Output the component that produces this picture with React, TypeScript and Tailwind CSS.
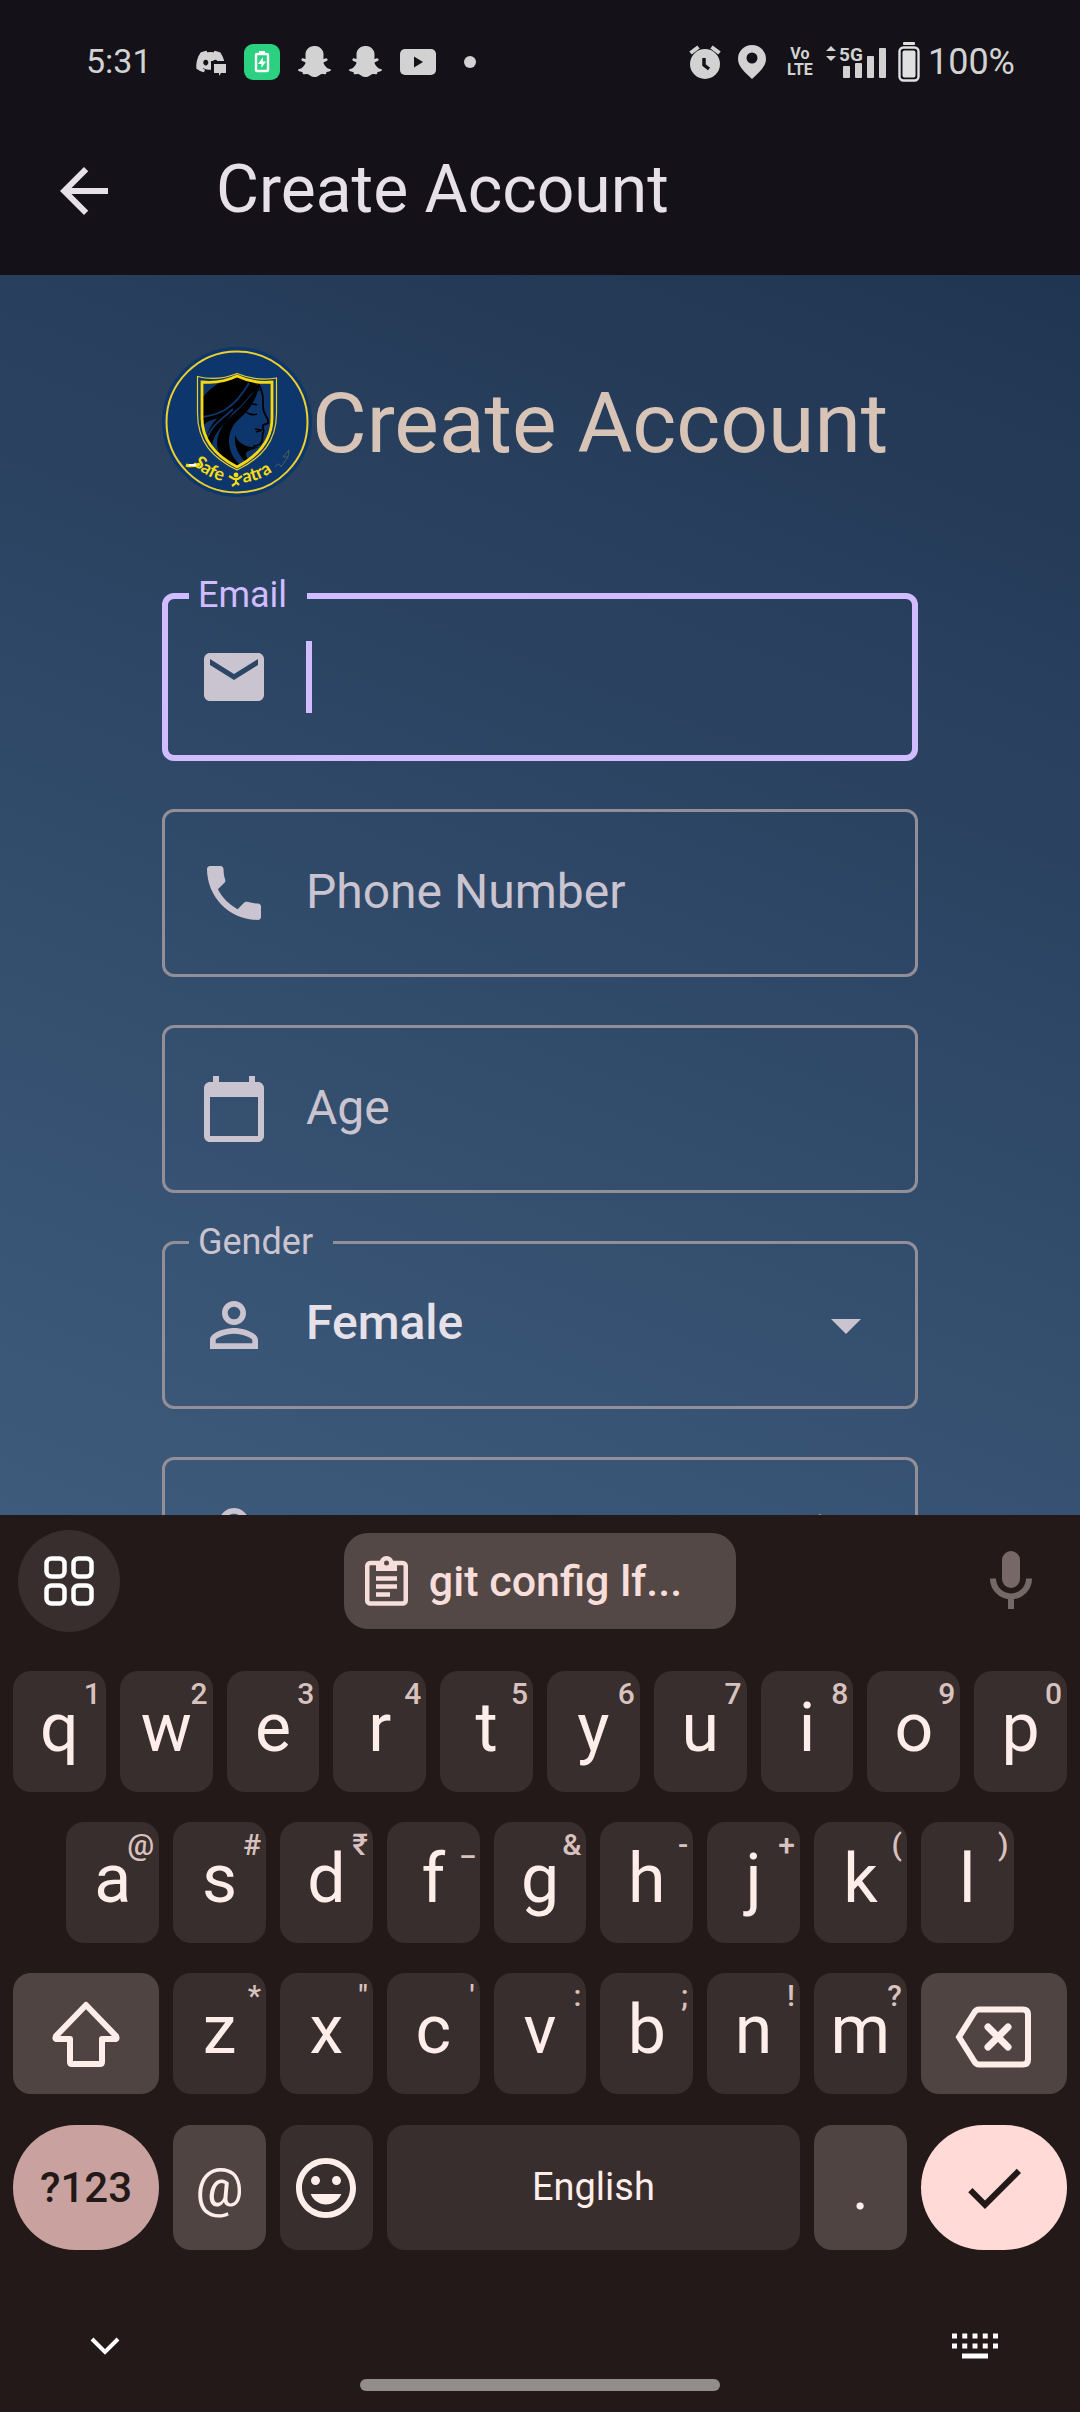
import React from "react";
import {
  MdArrowBack,
  MdArrowDropDown,
  MdCalendarToday,
  MdCheck,
  MdEmail,
  MdLockOutline,
  MdMood,
  MdPersonOutline,
  MdPhone,
  MdVisibilityOff,
} from "react-icons/md";
import { FaDiscord, FaSnapchatGhost } from "react-icons/fa";

function StatusBar() {
  return (
    <div className="flex h-[107px] items-center bg-[#141218] pt-4 pr-[65px] pl-[86px] text-[36px] text-[#d2d2d2]">
      <span className="w-[109px] text-[34px]">5:31</span>
      <div className="flex items-center gap-[18px]">
        <div className="relative">
          <FaDiscord className="size-[31px]" aria-label="Discord" />
          <svg viewBox="0 0 16 16" className="absolute -right-px bottom-0 size-4" aria-hidden="true">
            <path d="M0 0h16v16H0z" fill="#141218" />
            <path d="M3 3h12v9h-5l-2 3v-3H3z" fill="#d2d2d2" />
          </svg>
        </div>
        <svg viewBox="0 0 36 36" className="size-9" aria-label="Battery charging">
          <rect width="36" height="36" rx="9" fill="#2bd180" />
          <rect x="15" y="7" width="6" height="3" fill="#fff" />
          <rect x="12" y="10" width="12" height="17" rx="1" fill="none" stroke="#fff" strokeWidth="2.4" />
          <path d="M19 13l-5 7h3.400v4l4.600-6.500h-3.200z" fill="#fff" />
        </svg>
        <FaSnapchatGhost className="size-[33px]" aria-label="Snapchat" />
        <FaSnapchatGhost className="size-[33px]" aria-label="Snapchat" />
        <svg viewBox="0 0 36 26" className="h-[26px] w-9" aria-label="YouTube">
          <rect width="36" height="26" rx="5" fill="#d2d2d2" />
          <path d="M14 7.500v11l9-5.500z" fill="#141218" />
        </svg>
        <span className="ml-[10px] size-3 rounded-full bg-[#d2d2d2]" />
      </div>
      <div className="ml-auto flex items-center">
        <svg viewBox="0 0 32 34" className="mr-[17px] h-[34px] w-8" aria-label="Alarm">
          <circle cx="16" cy="19" r="15" fill="#d2d2d2" />
          <path d="M1.500 8l8-6M30.500 8l-8-6" stroke="#d2d2d2" strokeWidth="4" />
          <path d="M15 13v7l5 4" fill="none" stroke="#141218" strokeWidth="3.500" />
        </svg>
        <svg viewBox="0 0 28 34" className="mr-[21px] h-[34px] w-7" aria-label="Location">
          <path d="M14 0a14 14 0 0 0-14 14c0 8 8 14 14 20 6-6 14-12 14-20A14 14 0 0 0 14 0zm0 7.500a5.500 5.500 0 1 1 0 11 5.500 5.500 0 0 1 0-11z" fill="#d2d2d2" fillRule="evenodd" />
        </svg>
        <span className="mr-3 flex w-[26px] flex-col items-center font-['Liberation_Sans_Narrow',Roboto,sans-serif] text-[16px] leading-4 font-bold">
          <span>Vo</span>
          <span>LTE</span>
        </span>
        <svg viewBox="0 0 62 34" className="mr-[11px] h-[34px] w-[62px] overflow-visible" aria-label="5G signal">
          <path d="M6 1l5 5H1zM6 16l5-5H1z" fill="#d2d2d2" />
          <text x="14" y="16" fill="#d2d2d2" fontSize="19" fontWeight="700">5G</text>
          <rect x="18" y="21" width="7" height="12" rx="1" fill="#d2d2d2" />
          <rect x="30" y="18" width="7" height="15" rx="1" fill="#d2d2d2" />
          <rect x="42" y="11" width="7" height="22" rx="1" fill="#d2d2d2" />
          <rect x="54" y="3" width="7" height="30" rx="1" fill="#d2d2d2" />
        </svg>
        <svg viewBox="0 0 22 40" className="mr-2 h-10 w-[22px]" aria-label="Battery full">
          <rect x="5" y="0" width="12" height="3" rx="1" fill="#e0e0e0" />
          <rect x="1.500" y="5.500" width="19" height="33" rx="4" fill="none" stroke="#e0e0e0" strokeWidth="2.400" />
          <rect x="4.500" y="8.500" width="13" height="27" rx="2" fill="#e0e0e0" />
        </svg>
        <span>100%</span>
      </div>
    </div>
  );
}

function Logo() {
  return (
    <svg viewBox="0 0 150 150" className="size-[150px] shrink-0" role="img" aria-label="Safe Yatra">
      <defs>
        <path id="logo-arc" d="M14 75A61 61 0 0 0 136 75" />
        <clipPath id="logo-shield">
          <path d="M40 35q18 2 35-6 17 8 35 6v38c0 22-14 36-35 47-21-11-35-26-35-47z" />
        </clipPath>
      </defs>
      <circle cx="75" cy="75" r="75" fill="#0d366d" />
      <circle cx="75" cy="75" r="70.500" fill="none" stroke="#eed02b" strokeWidth="2" />
      <path d="M35.500 29.500q20 5 39.500-3 19.500 8 39.500 4.500v35c0 29-15 45-39.500 57-24.500-12-39.500-28-39.500-57z" fill="none" stroke="#e8cf30" strokeWidth="1.200" />
      <g clipPath="url(#logo-shield)">
        <path d="M38 54C46 42 60 31 78 30c12 1 18 6 20 14-9-4-13 14-29 22-9 5-20 8-31 8z" fill="#000" />
        <path d="M92 33c7 5 9 13 9 21 0 6-1 9 3 15 2 3 3 5 2 7-1 1-3 1-5 2" fill="none" stroke="#000" strokeWidth="1.800" />
        <path d="M98 36C94 56 84 66 75 74c-9 9-11 25-3 37l8 10-12-3C55 111 52 96 58 84c4-9 13-16 21-24 8-9 14-16 19-24z" fill="#000" />
        <path d="M38 72c15-1 28-4 39-14L64 75c-8 8-13 14-15 28l-5-8c1-12 7-20 13-25-7 3-13 4-17 10z" fill="#000" />
        <path d="M40 70c15-2 31-6 47-34M45 91c4-12 14-18 26-29" fill="none" stroke="#0d366d" strokeWidth="1.800" />
        <path d="M73 88c3 9 12 13 24 12-10 4-14 4-13 8 1 4 4 7 3 10-10-8-15-18-14-30z" fill="#000" />
        <path d="M93 82l7 1-6 2M101 78c-1 4 2 5 0 8-1 2 0 5-1 8-1 3-4 5-9 5" fill="none" stroke="#000" strokeWidth="1.700" />
        <path d="M84 65q5 4 11 2M85 58q5-2 10 0" fill="none" stroke="#000" strokeWidth="1.600" />
      </g>
      <path d="M40 35q18 2 35-6 17 8 35 6v36c0 23-14 38-35 49-21-11-35-26-35-49z" fill="none" stroke="#f8d80b" strokeWidth="2.800" />
      <g fill="#f8dc12" fontFamily="Lato, sans-serif" fontWeight="700" fontSize="18">
        <text><textPath href="#logo-arc" startOffset="46">Safe</textPath></text>
        <text><textPath href="#logo-arc" startOffset="102">atra</textPath></text>
      </g>
      <circle cx="74" cy="128" r="2.400" fill="#f8dc12" />
      <path d="M67 129l5 3h4l4-3M74 131v5l-4 3M74 135l3 3" fill="none" stroke="#f8dc12" strokeWidth="2.200" />
      <path d="M24 118q6 2 14-1" fill="none" stroke="#f8dc12" strokeWidth="3" />
      <path d="M27 118h7" stroke="#fff" strokeWidth="2" />
      <path d="M113 120q4-6 6 0l7-10M121 110l6-7-1 7z" fill="none" stroke="#5a6650" strokeWidth="0.800" />
    </svg>
  );
}

function Notch({ id, label, focused }: { id: string; label?: string; focused?: boolean }) {
  if (!label) {
    return <div className="pointer-events-none absolute inset-0 rounded-xl border-[3px] border-[#938f99]" />;
  }
  return (
    <fieldset
      className={
        focused
          ? "pointer-events-none absolute inset-x-0 -top-[15px] bottom-0 rounded-xl border-[6px] border-[#d0bcff] pl-[21px] text-[#d0bcff]"
          : "pointer-events-none absolute inset-x-0 -top-4 bottom-0 rounded-xl border-[3px] border-[#938f99] pl-6 text-[#cac4d0]"
      }
    >
      <legend className={focused ? "h-9 pr-5 pl-[9px] text-[36px] leading-[34px]" : "h-[35px] pr-5 pl-[9px] text-[36px] leading-[34px]"}>
        <label htmlFor={id}>{label}</label>
      </legend>
    </fieldset>
  );
}

function Field(props: {
  id: string;
  icon: React.ReactNode;
  label?: string;
  focused?: boolean;
  children: React.ReactNode;
}) {
  return (
    <div className="relative flex h-[168px] items-center gap-9 px-9 text-[48px] leading-[68px] text-[#e6e0e9] [&>svg]:size-[72px] [&>svg]:shrink-0 [&>svg]:text-[#cac4d0]">
      <Notch id={props.id} label={props.label} focused={props.focused} />
      {props.icon}
      {props.children}
    </div>
  );
}

const inputClass = "h-[72px] w-full min-w-0 flex-1 bg-transparent pb-1 outline-none placeholder:text-[#cac4d0]";

function Form() {
  return (
    <main className="h-[1240px] overflow-hidden bg-linear-[201deg] from-[#203552] to-[#3e5b7c] pt-[72px]">
      <form className="mx-auto flex w-[70%] flex-col gap-12">
        <div className="mb-12 flex items-center">
          <Logo />
          <h1 className="pt-1 text-[84px] leading-[100px] whitespace-nowrap text-[#d7c4b7]">Create Account</h1>
        </div>
        <Field id="email" label="Email" focused icon={<MdEmail />}>
          <div className="flex flex-1 items-center">
            <span className="h-[72px] w-[6px] bg-[#d0bcff]" />
            <input id="email" type="email" className={inputClass + " caret-transparent"} />
          </div>
        </Field>
        <Field id="phone" icon={<MdPhone />}>
          <input id="phone" type="tel" aria-label="Phone Number" placeholder="Phone Number" className={inputClass} />
        </Field>
        <Field id="age" icon={<MdCalendarToday />}>
          <input id="age" type="text" aria-label="Age" placeholder="Age" className={inputClass} />
        </Field>
        <Field id="gender" label="Gender" icon={<MdPersonOutline />}>
          <select id="gender" defaultValue="Female" className="h-[72px] min-w-0 flex-1 appearance-none bg-transparent pb-1 font-medium outline-none">
            <option>Female</option>
            <option>Male</option>
          </select>
          <MdArrowDropDown className="pointer-events-none" />
        </Field>
        <Field id="password" icon={<MdLockOutline />}>
          <input id="password" type="password" aria-label="Password" className={inputClass} />
          <MdVisibilityOff />
        </Field>
      </form>
    </main>
  );
}

function Key({ letter, hint, className = "" }: { letter: string; hint?: string; className?: string }) {
  return (
    <button type="button" className={"relative col-span-2 flex items-center justify-center rounded-[18px] bg-[#382e2d] pb-2 text-[68px] leading-none " + className}>
      {letter}
      {hint && <span className="absolute top-[7px] right-[5px] text-[30px] leading-8 font-medium text-[#d8c2bf]">{hint}</span>}
    </button>
  );
}

const row1 = ["q1", "w2", "e3", "r4", "t5", "y6", "u7", "i8", "o9", "p0"];
const row2 = ["a@", "s#", "d₹", "f_", "g&", "h-", "j+", "k(", "l)"];
const row3 = ["z*", 'x"', "c'", "v:", "b;", "n!", "m?"];

function Keyboard() {
  return (
    <section className="flex flex-col bg-[#231918] text-[#ffedea]" aria-label="Keyboard">
      <div className="grid h-[156px] grid-cols-[1fr_auto_1fr] items-start px-[18px] pt-[15px]">
        <button type="button" aria-label="Toolbar" className="flex size-[102px] items-center justify-center rounded-full bg-[#382e2d]">
          <svg viewBox="0 0 50 50" className="size-[50px]" fill="none" stroke="#fff" strokeWidth="4.500">
            <rect x="2.500" y="2.500" width="18" height="18" rx="5" />
            <rect x="29.500" y="2.500" width="18" height="18" rx="5" />
            <rect x="2.500" y="29.500" width="18" height="18" rx="5" />
            <rect x="29.500" y="29.500" width="18" height="18" rx="5" />
          </svg>
        </button>
        <button type="button" className="mt-[3px] flex h-24 items-center gap-[21px] rounded-3xl bg-[#534846] pr-[54px] pl-[21px] text-[43px] font-medium text-[#f8dedb]">
          <svg viewBox="0 0 43 50" className="h-[50px] w-[43px]" fill="none" stroke="#f8dedb" strokeWidth="4.500">
            <rect x="2.250" y="7" width="38.500" height="40.500" rx="3" />
            <path d="M11 7h21v8H11z" fill="#f8dedb" stroke="none" />
            <circle cx="21.500" cy="7" r="7" fill="#f8dedb" stroke="none" />
            <circle cx="21.500" cy="7" r="2.500" fill="#534846" stroke="none" />
            <path d="M11 22.500h21M11 30.500h21M11 38.500h14" />
          </svg>
          <span>git config lf...</span>
        </button>
        <button type="button" aria-label="Voice input" className="mt-[21px] mr-[30px] justify-self-end">
          <svg viewBox="0 0 42 58" className="h-[58px] w-[42px]" fill="none" stroke="#766866" strokeWidth="6">
            <rect x="12" y="0" width="18" height="37" rx="9" fill="#766866" stroke="none" />
            <path d="M3 27.500a18 18 0 0 0 36 0M21 45v13" />
          </svg>
        </button>
      </div>
      <div className="grid auto-rows-[121px] grid-cols-20 gap-x-[14px] gap-y-[30px] px-[13px]">
        {row1.map((k) => (
          <Key key={k} letter={k[0]} hint={k[1]} />
        ))}
        {row2.map((k, i) => (
          <Key key={k} letter={k[0]} hint={k[1]} className={i === 0 ? "col-start-2" : ""} />
        ))}
        <button type="button" aria-label="Shift" className="col-span-3 col-start-1 flex items-center justify-center rounded-[18px] bg-[#4f4442]">
          <svg viewBox="0 0 70 68" className="h-[68px] w-[70px]" fill="none" stroke="#ffedea" strokeWidth="6" strokeLinejoin="round">
            <path d="M35 5L5 36q-1.500 3 1 3h13v23q0 2 2 2h28q2 0 2-2V39h13q2.500 0 1-3z" />
          </svg>
        </button>
        {row3.map((k) => (
          <Key key={k} letter={k[0]} hint={k[1]} />
        ))}
        <button type="button" aria-label="Backspace" className="col-span-3 flex items-center justify-center rounded-[18px] bg-[#4f4442]">
          <svg viewBox="0 0 78 62" className="mt-[6px] h-[62px] w-[78px]" fill="none" stroke="#ffedea" strokeWidth="6">
            <path d="M4 31L19 7q2-3.500 5-3.500h44q5 0 5 5v45q0 5-5 5H24q-3 0-5-3.500z" />
            <path d="M33 21l20 20M53 21L33 41" strokeWidth="7" strokeLinecap="round" />
          </svg>
        </button>
      </div>
      <div className="mt-[31px] grid h-[125px] grid-cols-20 gap-x-[14px] px-[13px]">
        <button type="button" className="col-span-3 rounded-full bg-[#c9a29f] text-[42px] font-medium text-[#231918]">?123</button>
        <button type="button" className="col-span-2 rounded-[18px] bg-[#4f4442] text-[54px]">@</button>
        <button type="button" aria-label="Emoji" className="col-span-2 flex items-center justify-center rounded-[18px] bg-[#382e2d]">
          <MdMood className="size-[72px]" />
        </button>
        <button type="button" className="col-span-8 rounded-[18px] bg-[#382e2d] text-[38px]">English</button>
        <button type="button" className="col-span-2 rounded-[18px] bg-[#4f4442] text-[64px]">.</button>
        <button type="button" aria-label="Done" className="col-span-3 flex items-center justify-center rounded-full bg-[#ffdad6] text-[#231918]">
          <MdCheck className="size-[72px]" />
        </button>
      </div>
      <div className="flex items-center justify-between pt-[82px] pr-[82px] pl-[89px]">
        <button type="button" aria-label="Hide keyboard">
          <svg viewBox="0 0 32 20" className="h-5 w-8" fill="none" stroke="#fff" strokeWidth="4">
            <path d="M3 3l13 13L29 3" />
          </svg>
        </button>
        <button type="button" aria-label="Switch keyboard">
          <svg viewBox="0 0 46 28" className="h-7 w-[46px]" stroke="#fff" strokeWidth="5" fill="none">
            <path d="M0 4h46M0 14h46" strokeDasharray="5 5.250" />
            <path d="M10 24h26" />
          </svg>
        </button>
      </div>
      <div className="mt-[19px] mb-5 h-3 w-1/3 self-center rounded-full bg-[#928c8b]" />
    </section>
  );
}

export default function App() {
  return (
    <div className="min-h-screen bg-[#231918] font-[Roboto,sans-serif]">
      <StatusBar />
      <header className="flex h-[168px] items-center bg-[#141218] pl-12 text-[#e6e0e9]">
        <button type="button" aria-label="Back" className="mr-24">
          <MdArrowBack className="size-[72px]" />
        </button>
        <h2 className="pb-[3px] text-[66px] leading-[84px]">Create Account</h2>
      </header>
      <Form />
      <Keyboard />
    </div>
  );
}
